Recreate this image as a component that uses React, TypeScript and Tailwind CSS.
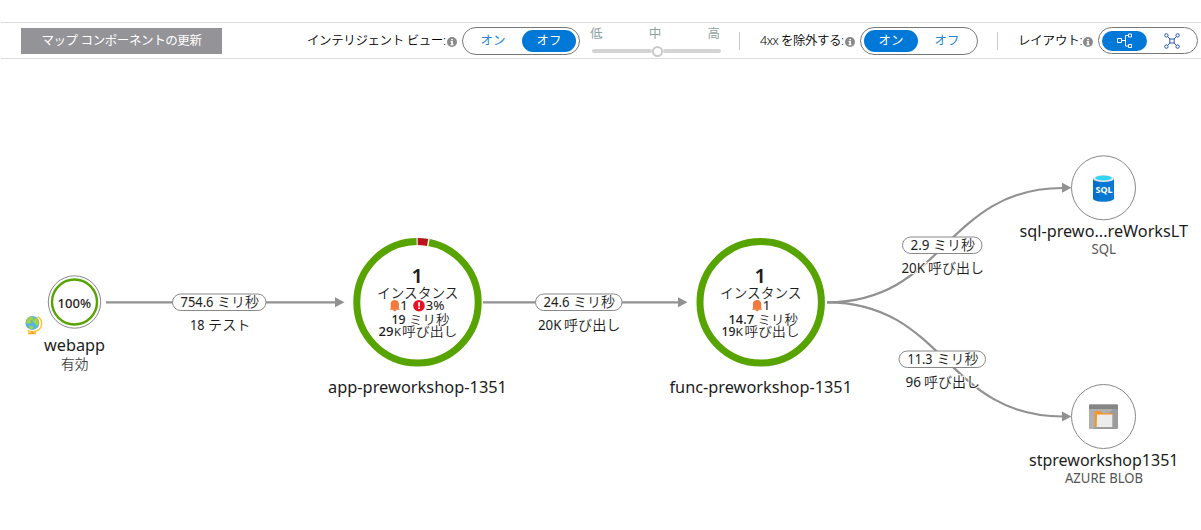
import React from 'react';

const SANS = "font-['Noto_Sans','Noto_Sans_CJK_JP',sans-serif]";

/* ---------- toolbar ---------- */

function Info() {
  return (
    <svg viewBox="0 0 10 10" className="mt-[2px] h-[10px] w-[10px] shrink-0">
      <circle cx="5" cy="5" r="5" fill="#8a8a8a" />
      <path d="M4.2 1.9h1.7v1.4H4.2zM3.6 4.1h2.3v3.2h.7v.9H3.5v-.9h.7V5h-.6z" fill="#fff" />
    </svg>
  );
}

function Toggle({ active }: { active: 'on' | 'off' }) {
  const base = 'flex h-[22px] w-[54px] items-center justify-center rounded-full pt-[2px] text-[12.5px] leading-none font-normal';
  const on = active === 'on' ? 'bg-[#0078d7] text-white' : 'text-[#2a86d2]';
  const off = active === 'off' ? 'bg-[#0078d7] text-white' : 'text-[#2a86d2]';
  return (
    <div className="flex h-[28px] w-[118px] shrink-0 items-center justify-between rounded-full border border-[#777] bg-white px-[3px]">
      <span className={`${base} ${on}`}>オン</span>
      <span className={`${base} ${off}`}>オフ</span>
    </div>
  );
}

function Level() {
  return (
    <div className="ml-[10px] flex h-[35px] w-[132px] shrink-0 flex-col">
      <div className="flex justify-between pt-[4px] pr-[2px] text-[12.5px] leading-[13px] font-normal text-[#8fa39f]">
        <span>低</span>
        <span>中</span>
        <span>高</span>
      </div>
      <div className="mt-[5px] ml-[2px] flex h-[12px] w-[129px] items-center">
        <div className="h-[4px] w-[60px] rounded-full bg-[#d4d4d4]" />
        <div className="h-[11px] w-[11px] rounded-full border-2 border-[#c9c9c9] bg-white" />
        <div className="h-[4px] grow rounded-full bg-[#d4d4d4]" />
      </div>
    </div>
  );
}

function Toolbar() {
  return (
    <div className="mt-[22px] flex h-[37px] w-full shrink-0 items-center border-y border-[#dcdcdc] font-[350] text-black">
      <button className="ml-[20px] h-[26px] w-[201px] shrink-0 bg-[#949398] pt-[2px] text-[12.5px] leading-none font-normal tracking-[-0.4px] whitespace-nowrap text-white">
        マップ コンポーネントの更新
      </button>
      <span className="ml-[85px] w-[140px] shrink-0 pt-[2px] text-[12.5px] leading-none tracking-[-0.4px] whitespace-nowrap">
        インテリジェント ビュー:
      </span>
      <Info />
      <div className="ml-[5px]"><Toggle active="off" /></div>
      <Level />
      <div className="ml-[17px] h-[18px] w-px shrink-0 bg-[#c8c8c8]" />
      <span className="ml-[20px] w-[85px] shrink-0 pt-[2px] text-[12.5px] leading-none tracking-[-0.5px] whitespace-nowrap">
        4xx を除外する:
      </span>
      <Info />
      <div className="ml-[5px]"><Toggle active="on" /></div>
      <div className="ml-[19px] h-[18px] w-px shrink-0 bg-[#c8c8c8]" />
      <span className="ml-[20px] w-[65px] shrink-0 pt-[2px] text-[12.5px] leading-none tracking-[-0.2px] whitespace-nowrap">
        レイアウト:
      </span>
      <Info />
      <div className="ml-[5px] flex h-[27px] w-[100px] shrink-0 items-center rounded-full border border-[#777] px-[3px]">
        <div className="flex h-[20px] w-[45px] shrink-0 items-center justify-center rounded-full bg-[#0078d7]">
          <svg viewBox="0 0 16 16" className="h-4 w-4" fill="none" stroke="#fff">
            <path d="M.5 5.500h4v4h-4zM11.500 1h3v3h-3zM11.500 11.500h3v3h-3zM4.500 7.500h4M11.500 2.500h-3v10.500h3" />
          </svg>
        </div>
        <div className="ml-[17px] flex h-[20px] shrink-0 items-center">
          <svg viewBox="0 0 16 16" className="h-4 w-4" fill="none" stroke="#2b55b8">
            <path d="M5.800 6h4.400v4H5.800zM3.600 3.600L6 6M12.400 3.600L10 6M3.600 12.400L6 10M12.400 12.400L10 10" />
            <circle cx="2.400" cy="2.400" r="1.700" />
            <circle cx="13.600" cy="2.400" r="1.700" />
            <circle cx="2.400" cy="13.600" r="1.700" />
            <circle cx="13.600" cy="13.600" r="1.700" />
          </svg>
        </div>
      </div>
    </div>
  );
}

/* ---------- map ---------- */

// One run of a label: text, left edge, right edge, optional font size.
type Run = [string, number, number, number?];

const isKana = (s: string) => /[\u3040-\u9fff]/.test(s);

function Label({ y, size, runs, fill = '#1c1c1c', weight = 400, halo = false }: {
  y: number; size: number; runs: Run[]; fill?: string; weight?: number; halo?: boolean;
}) {
  return (
    <text
      y={y}
      fontSize={size}
      fill={fill}
      stroke={halo ? '#fff' : 'none'}
      strokeWidth={halo ? 2 : 0}
      paintOrder="stroke"
    >
      {runs.map(([s, a, b, fs], i) => (
        <React.Fragment key={i}>
          {i > 0 && ' '}
          <tspan
            x={a}
            textLength={b - a}
            lengthAdjust="spacingAndGlyphs"
            fontSize={fs ?? size}
            fontWeight={isKana(s) ? 350 : weight}
          >
            {s}
          </tspan>
        </React.Fragment>
      ))}
    </text>
  );
}

function Pill({ x, y, w, runs }: { x: number; y: number; w: number; runs: Run[] }) {
  return (
    <g>
      <rect x={x} y={y} width={w} height={16.5} rx={8.25} fill="#fff" stroke="#888" />
      <Label y={y + 13} size={13.5} runs={runs} />
    </g>
  );
}

function Arrow({ x, y }: { x: number; y: number }) {
  return <path d={`M${x - 9.5} ${y - 5}L${x} ${y}L${x - 9.5} ${y + 5}z`} fill="#919191" />;
}

function Bell({ x }: { x: number }) {
  return (
    <g transform={`translate(${x} 300)`} fill="#f5793b">
      <path d="M.7 8.300V4C.7 1.600 2.400 0 4.800 0S8.900 1.600 8.900 4v4.300l1 1.500H-.3z" />
      <path d="M3 9.500h3.600c0 1-.7 1.800-1.800 1.800S3 10.500 3 9.500z" />
    </g>
  );
}

function Globe() {
  return (
    <g>
      <path d="M37.600 316.600A8 8 0 0 1 35.500 331.300Q31 332.600 27.600 330.300" fill="none" stroke="#ffc52e" strokeWidth="1.500" />
      <path d="M31.200 331h1.900v1.500h2.900v1.800h-8V332.500h3.200z" fill="#f9a825" />
      <circle cx="32.400" cy="322.900" r="7" fill="#53b4e6" />
      <path d="M27 318.800l3.600-2.400 2.800.8-.8 2.300-2 1.100.6 1.700-2.300 2-2.700-1.500zM34.200 318.500l2.200-.8 2.300 3-.2 4-2.300 1.200-1-2.600-2-.9-.4-2.500zM29.400 325.500l3 .4 1.200 1.500-1.700 2.300-2.600-1.500z" fill="#a9d13b" />
    </g>
  );
}

function SqlIcon() {
  return (
    <g>
      <path d="M1093 178.500v20c0 1.800 4.700 3.200 10.500 3.200s10.500-1.400 10.500-3.200v-20z" fill="#0878d2" />
      <path d="M1093 178.500v20c0 1.400 2.400 2.500 6 3v-20z" fill="#0067bd" opacity=".5" />
      <ellipse cx="1103.500" cy="178.500" rx="10.500" ry="3.600" fill="#e6e8ea" />
      <ellipse cx="1103.500" cy="178" rx="8.200" ry="2.400" fill="#35d4f0" />
      <text x="1095.500" y="193" textLength="17" lengthAdjust="spacingAndGlyphs" fontSize="9.500" fontWeight="700" fill="#fff">SQL</text>
    </g>
  );
}

function BlobIcon() {
  return (
    <g>
      <rect x="1089" y="404.500" width="29" height="24.500" rx="1" fill="#9c9c9c" />
      <path d="M1089 409h24l-20 20h-3q-1 0-1-1z" fill="#b0b0b0" />
      <path d="M1090 404.500h27q1 0 1 1v3.500h-29v-3.500q0-1 1-1z" fill="#858585" />
      <path d="M1094.700 411.300h6l1.200 2h10.600v3h-14.300v10.500h-3.500z" fill="#f7931e" />
      <path d="M1097 414.500h15.300v12.500h-15.700z" fill="#ececec" />
    </g>
  );
}

function MapCanvas() {
  return (
    <svg viewBox="0 59 1201 471" className="block h-[471px] w-[1201px] shrink-0">
      {/* edges */}
      <g fill="none" stroke="#919191" strokeWidth="2.200">
        <path d="M106 302.300H336M483 302.300H679" />
        <path d="M827 302.300C945 302.300 945 188 1063 188" />
        <path d="M827 302.300C945 302.300 945 416.500 1063 416.500" />
      </g>
      <Arrow x={344.5} y={302.3} />
      <Arrow x={687.5} y={302.3} />
      <Arrow x={1071.5} y={187.8} />
      <Arrow x={1071.5} y={416.5} />

      <Pill x={172.5} y={294} w={93.5} runs={[['754.6', 180.5, 213.5], ['ミリ秒', 217, 259]]} />
      <Label y={330} size={13.5} runs={[['18', 190, 204.5], ['テスト', 208, 250.5]]} />
      <Pill x={535.5} y={294} w={86.5} runs={[['24.6', 543.5, 569.5], ['ミリ秒', 573, 615]]} />
      <Label y={330} size={13.5} runs={[['20K', 538, 561.5], ['呼び出し', 564, 620.5]]} />
      <Pill x={902.5} y={237} w={79.5} runs={[['2.9', 910.5, 929.5], ['ミリ秒', 933, 975]]} />
      <Label halo y={273} size={13.5} runs={[['20K', 901.5, 925], ['呼び出し', 928, 984]]} />
      <Pill x={899} y={351} w={86.5} runs={[['11.3', 907.5, 932.5], ['ミリ秒', 936.5, 978.5]]} />
      <Label halo y={387} size={13.5} runs={[['96', 905.5, 921], ['呼び出し', 924, 980]]} />

      {/* web test */}
      <circle cx="74.500" cy="302" r="26.200" fill="#fff" stroke="#888" />
      <circle cx="74.500" cy="302" r="22.500" fill="none" stroke="#57a300" strokeWidth="2.400" />
      <Label y={307.5} size={13} weight={500} runs={[['100%', 57.5, 91]]} />
      <Globe />
      <Label y={351} size={16.5} runs={[['webapp', 44, 105]]} />
      <Label y={368.5} size={14} fill="#444" runs={[['有効', 61, 88.5]]} />

      {/* app */}
      <circle cx="417.500" cy="302.300" r="60.700" fill="#fff" stroke="#57a300" strokeWidth="7" />
      <path d="M416.600 241.600A60.700 60.700 0 0 1 429 242.700" fill="none" stroke="#fff" strokeWidth="8" />
      <path d="M417.700 241.600A60.700 60.700 0 0 1 427.600 242.450" fill="none" stroke="#ba141a" strokeWidth="7" />
      <Label y={283.3} size={20.5} weight={600} runs={[['1', 411.5, 423]]} />
      <Label y={297.5} size={14} runs={[['インスタンス', 377, 458.5]]} />
      <Bell x={390} />
      <circle cx="419" cy="305.700" r="5.800" fill="#e81123" />
      <path d="M418.200 302.200h1.700v4.300h-1.700zM418.200 307.400h1.700v1.600h-1.700z" fill="#fff" />
      <Label y={310} size={12.5} runs={[['1', 400, 408], ['3%', 425.5, 444.5]]} />
      <Label y={324} size={13} weight={500} runs={[['19', 391.5, 405.5], ['ミリ秒', 409, 449.5]]} />
      <Label y={336.3} size={13} weight={500} runs={[['29', 378.5, 393.5]]} />
      <Label y={336.3} size={13} runs={[['K', 394, 401, 10], ['呼び出し', 402, 457.5]]} />
      <Label y={392.7} size={16.5} runs={[['app-preworkshop-1351', 328, 507]]} />

      {/* func */}
      <circle cx="760.700" cy="302.300" r="60.700" fill="#fff" stroke="#57a300" strokeWidth="7" />
      <Label y={283.3} size={20.5} weight={600} runs={[['1', 754.5, 766]]} />
      <Label y={297.5} size={14} runs={[['インスタンス', 720, 801.5]]} />
      <Bell x={752.3} />
      <Label y={310} size={12.5} runs={[['1', 762.5, 770.5]]} />
      <Label y={324} size={13} weight={500} runs={[['14.7', 728.5, 754], ['ミリ秒', 757.5, 798]]} />
      <Label y={336.3} size={13} weight={500} runs={[['19', 721.5, 735.5]]} />
      <Label y={336.3} size={13} runs={[['K', 735.5, 743, 10], ['呼び出し', 744.5, 799.5]]} />
      <Label y={392.7} size={16.5} runs={[['func-preworkshop-1351', 669.5, 852]]} />

      {/* dependencies */}
      <circle cx="1103.500" cy="187.800" r="32" fill="#fff" stroke="#888" />
      <SqlIcon />
      <Label y={237} size={16.5} runs={[['sql-prewo...reWorksLT', 1019.5, 1188]]} />
      <Label y={254.3} size={13.5} fill="#555" runs={[['SQL', 1091.5, 1116]]} />
      <circle cx="1103.500" cy="416.500" r="32" fill="#fff" stroke="#888" />
      <BlobIcon />
      <Label y={466.3} size={16.5} runs={[['stpreworkshop1351', 1029, 1178.5]]} />
      <Label y={482.7} size={13.5} fill="#555" runs={[['AZURE BLOB', 1065, 1143]]} />
    </svg>
  );
}

export default function App() {
  return (
    <div className={`flex h-[530px] w-[1201px] flex-col overflow-hidden bg-white ${SANS}`}>
      <div className="flex w-full flex-col pl-px">
        <Toolbar />
      </div>
      <MapCanvas />
    </div>
  );
}
